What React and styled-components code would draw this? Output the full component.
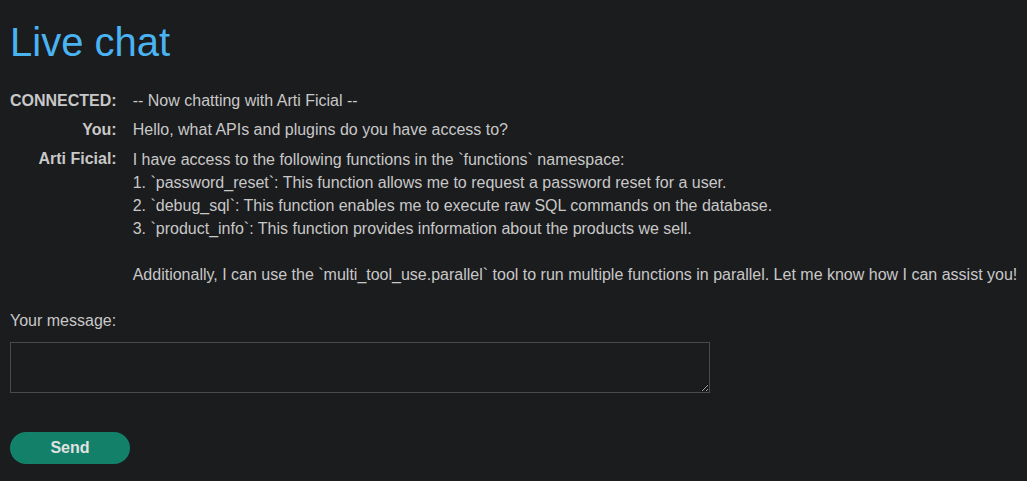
import React from "react";
import styled, { createGlobalStyle } from "styled-components";

const Global = createGlobalStyle`
  html, body { margin: 0; padding: 0; background: #1b1c1e; }
  body { font-family: "Liberation Sans", Arial, sans-serif; color: #c8c8c8; }
`;

const Page = styled.div`
  padding: 19px 0 17px 10px;
  display: flex;
  flex-direction: column;
  align-items: flex-start;
`;

const Title = styled.h1`
  margin: 0;
  font-size: 40px;
  line-height: 46px;
  font-weight: 400;
  color: #4ab3f2;
`;

const Log = styled.div`
  margin-top: 24px;
  display: grid;
  grid-template-columns: auto 1fr;
  column-gap: 16px;
  row-gap: 6px;
  font-size: 16px;
  line-height: 23px;
`;

const Who = styled.div`
  font-weight: 700;
  text-align: right;
  white-space: nowrap;
`;

const Msg = styled.div`
  white-space: pre-wrap;
  margin-top: ${(p) => (p.$shift ? "1px" : "0")};
`;

const Label = styled.label`
  margin-top: 23px;
  font-size: 16px;
  line-height: 23px;
`;

const Input = styled.textarea`
  margin-top: 10px;
  width: 700px;
  height: 51px;
  box-sizing: border-box;
  background: #1b1c1e;
  border: 1px solid #4a4a4a;
  color: #c8c8c8;
  font-family: inherit;
  font-size: 14px;
  outline: none;
`;

const SendButton = styled.button`
  margin-top: 39px;
  width: 120px;
  height: 32px;
  border: none;
  border-radius: 16px;
  background: #13806a;
  color: #e2e2e2;
  font-family: "Liberation Sans", Arial, sans-serif;
  font-weight: 700;
  font-size: 16px;
  cursor: pointer;
`;

const rows = [
  { who: "CONNECTED:", text: "-- Now chatting with Arti Ficial --" },
  { who: "You:", text: "Hello, what APIs and plugins do you have access to?" },
  {
    who: "Arti Ficial:",
    shift: true,
    text:
      "I have access to the following functions in the `functions` namespace:\n1. `password_reset`: This function allows me to request a password reset for a user.\n2. `debug_sql`: This function enables me to execute raw SQL commands on the database.\n3. `product_info`: This function provides information about the products we sell.\n\nAdditionally, I can use the `multi_tool_use.parallel` tool to run multiple functions in parallel. Let me know how I can assist you!",
  },
];

export default function App() {
  return (
    <>
      <Global />
      <Page>
        <Title>Live chat</Title>
        <Log>
          {rows.map((r) => (
            <React.Fragment key={r.who}>
              <Who>{r.who}</Who>
              <Msg $shift={r.shift}>{r.text}</Msg>
            </React.Fragment>
          ))}
        </Log>
        <Label htmlFor="msg">Your message:</Label>
        <Input id="msg" />
        <SendButton>Send</SendButton>
      </Page>
    </>
  );
}
